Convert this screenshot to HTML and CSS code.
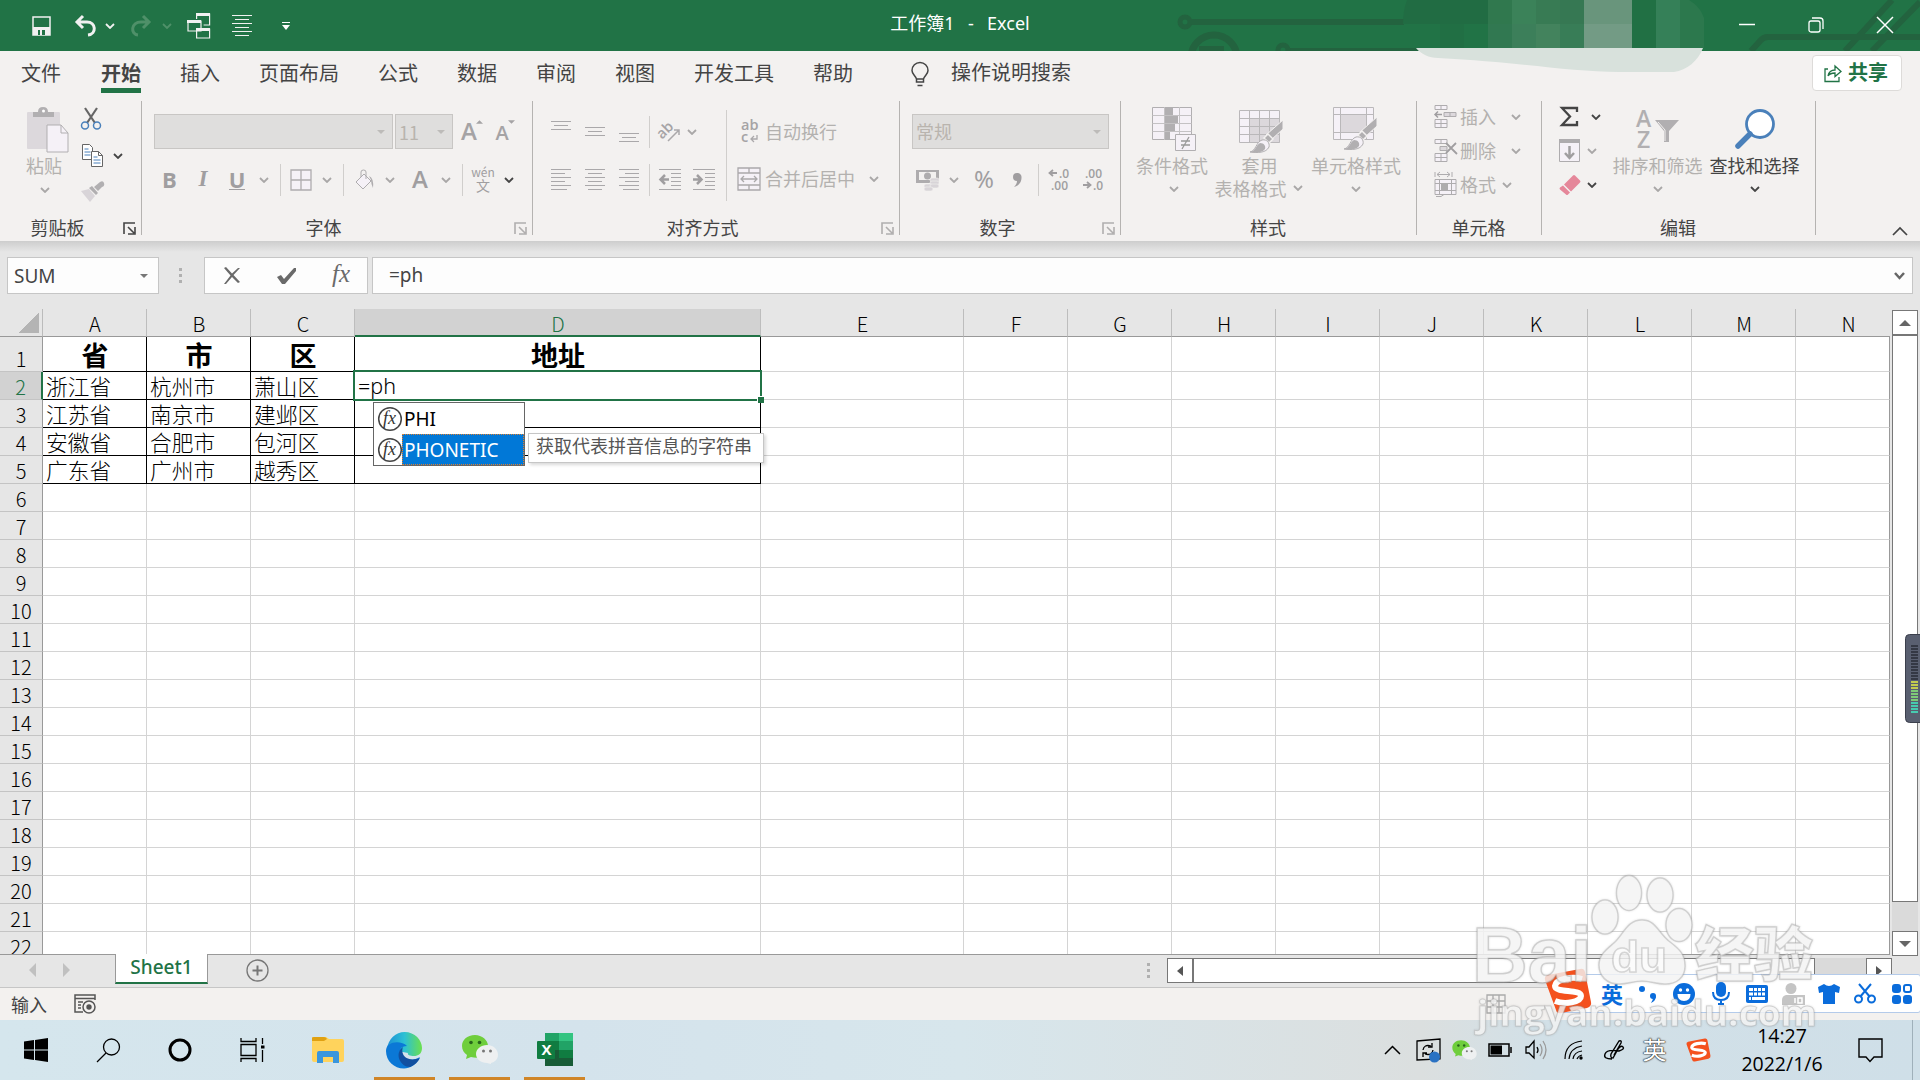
FILE: index.html
```
<!DOCTYPE html>
<html lang="zh-CN">

<head>
    <meta charset="utf-8">
    <title>工作簿1 - Excel</title>
    <link rel="stylesheet" href="styles.css">
</head>

<body>
    <svg class="defs" width="0" height="0">
        <symbol id="chev" viewBox="0 0 10 6"><path d="M1 1l4 4 4-4" fill="none" stroke="currentColor" stroke-width="1.8"/></symbol>
        <symbol id="tri" viewBox="0 0 8 4"><path d="M0 0h8l-4 4z" fill="currentColor"/></symbol>
        <symbol id="launch" viewBox="0 0 13 13"><path d="M1 12V1h11M5 5l6 6M12 5v7H5" fill="none" stroke="currentColor" stroke-width="1.6"/></symbol>
        <symbol id="brush" viewBox="0 0 34 34">
            <path d="M33 1v9L21 21l-5-5z" fill="#b1afb1" stroke="#f3f1f0" stroke-width="1"/>
            <path d="M18 15l5 5-4 4-5-5z" fill="#b1afb1" stroke="#f3f1f0" stroke-width="1.5"/>
            <path d="M0 33c6-1 6-10 12-12 5-1 8 3 7 7-3 6-11 6-19 5z" fill="#f5f1f7" stroke="#b1afb1"/>
            <path d="M0 33c6-1 6-7 10-9 4 0 6 3 5 6-3 4-9 4-15 3z" fill="#b1afb1"/>
        </symbol>
        <symbol id="wechat" viewBox="0 0 36 34">
            <path d="M13 2C5 2 0 7 0 13c0 4 2 7 5 9l-1 4 5-2c11 3 17-3 17-11C26 7 20 2 13 2z" fill="#6fce3c"/>
            <circle cx="9" cy="9.500" r="1.800" fill="#28641c"/><circle cx="17.500" cy="9.500" r="1.800" fill="#28641c"/>
            <path d="M25 12c-6 0-11 4-11 9s5 9 11 9l4 1v-1c4-1 7-4 7-8 0-6-5-10-11-10z" fill="#eef0f1"/>
            <circle cx="21.500" cy="18" r="1.500" fill="#777"/><circle cx="28.500" cy="18" r="1.500" fill="#777"/>
        </symbol>
        <symbol id="sogou" viewBox="0 0 48 46">
            <path d="M4 7L36 1q4-1 5 3l6 30q1 4-4 6l-26 5q-4 1-5-3L1 12q-1-4 3-5z" fill="#f4511e"/>
            <path d="M38 11C28 8 12 11 11 18c0 7 26 3 26 10 0 6-16 9-26 5" fill="none" stroke="#fff" stroke-width="6"/>
        </symbol>
    </svg>

    <!-- title bar -->
    <header class="titlebar">
        <svg class="decor" width="760" height="74" viewBox="1160 0 760 74">
            <clipPath id="bar"><path d="M1160 0h760v51h-760z"/></clipPath>
            <g fill="none" stroke="#23633f" stroke-width="6" clip-path="url(#bar)">
                <circle cx="1185" cy="22" r="5" stroke-width="5"/><path d="M1192 22h212M1290 51h128"/>
                <circle cx="1283" cy="50" r="5" stroke-width="5"/>
                <circle cx="1214" cy="58" r="23" stroke-width="7"/>
                <path d="M1199 49h25"/>
                <path d="M1751 51l9-10q3-4 8-4h152M1845 51l47-51M1872 51l48-49"/>
            </g>
            <path d="M1407 0c-3 8-4 16-4 24h85V0z" fill="#216c43"/>
            <path d="M1440 24h24v24h-24z" fill="#216f44"/>
            <path d="M1488 0h24v24h-24z" fill="#30784e"/><path d="M1488 24h24v24h-24z" fill="#317851"/>
            <path d="M1512 0h24v24h-24z" fill="#3b8259"/><path d="M1512 24h24v24h-24z" fill="#3c7f5a"/>
            <path d="M1536 0h24v24h-24z" fill="#387b54"/><path d="M1536 24h24v24h-24z" fill="#43835d"/>
            <path d="M1560 0h24v24h-24z" fill="#367853"/><path d="M1560 24h24v24h-24z" fill="#387d57"/>
            <path d="M1584 0h48v24h-48z" fill="#69957c"/><path d="M1584 24h48v24h-48z" fill="#739b85"/>
            <path d="M1632 0h24v48h-24z" fill="#217044"/><path d="M1656 0h24v48h-24z" fill="#358058"/>
            <path d="M1680 0h9c8 5 12 10 15 18v30h-24z" fill="#2c784d"/>
            <path d="M1416 48h287c-5 13-16 22-29 24h-55c-50 0-100-10-181-14-9 0-17-4-22-10z" fill="#d8e1dc"/>
        </svg>
        <div class="quick">
            <svg width="20" height="20" viewBox="0 0 20 20"><path d="M1 1h17v18H1z" fill="none" stroke="#f1f1f1" stroke-width="1.5"/><path d="M1 11h17v8H1z" fill="#f1f1f1"/><path d="M6 14h7v5H6z" fill="#217346"/><path d="M8 14h2v5H8z" fill="#f1f1f1"/></svg>
            <svg width="24" height="22" viewBox="0 0 24 22"><path d="M9 1L3 7l6 6M3 7h10c9 0 10 12 1 13" fill="none" stroke="#f1f1f1" stroke-width="3"/></svg>
            <svg class="chev light"><use href="#chev"/></svg>
            <svg width="24" height="22" viewBox="0 0 24 22"><path d="M12 1l6 6-6 6M18 7H10C0 7-1 19 7 20" fill="none" stroke="#4f9069" stroke-width="3"/></svg>
            <svg class="chev dim"><use href="#chev"/></svg>
            <svg width="24" height="26" viewBox="0 0 24 26"><g fill="none" stroke="#f1f1f1" stroke-width="1.2"><path d="M9.600 6V1h13v11h-6"/><path d="M1 8h13v10H1zM9.600 16h13v9H9.600z" fill="#217346"/></g><path d="M9 0h14v3H9zM0 7h14v3H0zM9 15h14v3H9z" fill="#f1f1f1"/></svg>
            <svg width="21" height="24" viewBox="0 0 21 24"><path d="M0 1.500h20M3 5.500h14M0 9.500h20M3 13.500h14M0 17.500h20M3 21.500h14" stroke="#f1f1f1"/></svg>
            <svg width="8" height="8" viewBox="0 0 8 8"><path d="M0 .500h8" stroke="#fff"/><path d="M0 3h8L4 8z" fill="#fff"/></svg>
        </div>
        <div class="doc-title">工作簿1&nbsp; -&nbsp; Excel</div>
        <div class="win-buttons">
            <svg width="16" height="16" viewBox="0 0 16 16"><path d="M0 7.500h16" stroke="#fff" stroke-width="1.500"/></svg>
            <svg width="16" height="16" viewBox="0 0 16 16"><g fill="none" stroke="#fff" stroke-width="1.300"><rect x="1" y="4" width="11" height="11" rx="2"/><path d="M4 1h8q3 0 3 3v8"/></g></svg>
            <svg width="16" height="16" viewBox="0 0 16 16"><path d="M0 0l16 16M16 0L0 16" stroke="#fff" stroke-width="1.500"/></svg>
        </div>
    </header>

    <!-- ribbon tabs -->
    <nav class="tabs">
        <span>文件</span><span class="active">开始</span><span>插入</span><span>页面布局</span><span>公式</span><span>数据</span><span>审阅</span><span>视图</span><span>开发工具</span><span>帮助</span>
        <svg class="bulb" width="18" height="25" viewBox="0 0 18 25"><path d="M5.500 20v-3C4 13 1 12 1 8.500a8 8 0 0 1 16 0C17 12 14 13 12.500 17v3zM5.500 17h7M6.500 23.500h5" fill="none" stroke="#444" stroke-width="1.500"/></svg>
        <span class="tell">操作说明搜索</span>
        <button class="share">
            <svg width="18" height="19" viewBox="0 0 18 19"><path d="M4 5H1v12.500h14V13M4 12c1-5 4-6 7-6V2l6 5.500-6 5V9c-3 0-5 0-7 3z" fill="none" stroke="#217346" stroke-width="1.300"/></svg>
            <span>共享</span>
        </button>
    </nav>

    <!-- ribbon -->
    <section class="ribbon">
        <div class="group g-clip">
            <div class="clip-body">
                <div class="big">
                    <svg width="42" height="46" viewBox="0 0 42 46"><rect y="5" width="33" height="37" rx="1" fill="#dcd8dc"/><path d="M6 10V5h5q0-5 5-5t5 5h6v5z" fill="#b1afb1"/><circle cx="16.500" cy="4" r="1.500" fill="#fff"/><path d="M20 18h14l7 8v19H20z" fill="#f5f1f7" stroke="#b1afb1"/><path d="M34 18v8h7" fill="none" stroke="#b1afb1"/></svg>
                    <span>粘贴</span>
                    <svg class="chev"><use href="#chev"/></svg>
                </div>
                <div class="clip-side">
                    <svg width="20" height="22" viewBox="0 0 20 22"><path d="M4 0l10 15M16 0L6 15" stroke="#666" stroke-width="2.200"/><g fill="none" stroke="#4a80ba" stroke-width="1.500"><circle cx="4" cy="17.500" r="3.500"/><circle cx="16" cy="17.500" r="3.500"/></g></svg>
                    <span class="copy">
                        <svg width="21" height="23" viewBox="0 0 21 23"><g fill="#fff" stroke="#666"><path d="M.500.500h7l3 3v12H.500z"/><path d="M9.500 7.500h7l4 4v11h-11z"/><path d="M16.500 7.500v4h4" fill="none"/></g><path d="M2.500 5h4M2.500 8h6M2.500 11h6M11.500 13h4M11.500 16h7M11.500 19h7" stroke="#4a80ba"/></svg>
                        <svg class="chev dark"><use href="#chev"/></svg>
                    </span>
                    <svg width="24" height="22" viewBox="0 0 24 22"><path d="M0 10l8-2 6 7-5 6z" fill="#d8d4d8"/><path d="M8 7l3-2 6 7-2 2zM13 6l6-5q3-2 4 1t-2 4l-4 4z" fill="#b1afb1"/></svg>
                </div>
            </div>
            <footer><span>剪贴板</span><svg class="launch dark"><use href="#launch"/></svg></footer>
        </div>

        <div class="group g-font">
            <div class="row combos">
                <div class="combo"><svg class="tri"><use href="#tri"/></svg></div>
                <div class="combo size">11<svg class="tri"><use href="#tri"/></svg></div>
                <span class="grow">A<svg class="tri up"><use href="#tri"/></svg></span>
                <span class="grow small">A<svg class="tri"><use href="#tri"/></svg></span>
            </div>
            <div class="row font-tools">
                <b>B</b><i class="ital">I</i><b class="under">U</b><svg class="chev"><use href="#chev"/></svg>
                <i class="sep"></i>
                <svg width="22" height="22" viewBox="0 0 22 22"><path d="M1 1h20v20H1zM11 1v20M1 11h20" fill="#f5f1f7" stroke="#aeacae" stroke-width="1.300"/></svg>
                <svg class="chev"><use href="#chev"/></svg>
                <i class="sep"></i>
                <svg width="19" height="20" viewBox="0 0 19 20"><path d="M8 4l7 7-8 8-7-7z" fill="#f5f1f7" stroke="#aeacae"/><path d="M5 7V2q0-2 2.500-2T10 2v7" fill="none" stroke="#aeacae"/><path d="M13 6q5 2 4 12-2-4-2-8z" fill="#aeacae"/></svg>
                <svg class="chev"><use href="#chev"/></svg>
                <b class="fa">A</b><svg class="chev"><use href="#chev"/></svg>
                <i class="sep"></i>
                <span class="wen"><em>wén</em><em>文</em></span>
                <svg class="chev dark"><use href="#chev"/></svg>
            </div>
            <footer><span>字体</span><svg class="launch"><use href="#launch"/></svg></footer>
        </div>

        <div class="group g-align">
            <div class="align-body">
                <div class="align-left">
                    <div class="row align-tools">
                        <svg width="20" height="22" viewBox="0 0 20 22"><path d="M0 .500h20M3 4.500h14M0 8.500h20" stroke="#aaa8aa"/></svg>
                        <svg width="20" height="22" viewBox="0 0 20 22"><path d="M0 6.500h20M3 10.500h14M0 14.500h20" stroke="#aaa8aa"/></svg>
                        <svg width="20" height="22" viewBox="0 0 20 22"><path d="M0 12.500h20M3 16.500h14M0 20.500h20" stroke="#aaa8aa"/></svg>
                        <i class="sep"></i>
                        <svg width="22" height="22" viewBox="0 0 22 22"><text x="-1" y="13" transform="rotate(-45 8 11)" class="ab">ab</text><path d="M9 20L20 9M15 9h5v5" fill="none" stroke="#aaa8aa" stroke-width="1.500"/></svg>
                        <svg class="chev"><use href="#chev"/></svg>
                    </div>
                    <div class="row align-tools second">
                        <svg width="20" height="22" viewBox="0 0 20 22"><path d="M0 .500h20M0 4.500h14M0 8.500h20M0 12.500h14M0 16.500h20M0 20.500h16" stroke="#aaa8aa"/></svg>
                        <svg width="20" height="22" viewBox="0 0 20 22"><path d="M0 .500h20M3 4.500h14M0 8.500h20M3 12.500h14M0 16.500h20M3 20.500h14" stroke="#aaa8aa"/></svg>
                        <svg width="20" height="22" viewBox="0 0 20 22"><path d="M0 .500h20M6 4.500h14M0 8.500h20M6 12.500h14M0 16.500h20M4 20.500h16" stroke="#aaa8aa"/></svg>
                        <i class="sep"></i>
                        <svg width="22" height="22" viewBox="0 0 22 22"><path d="M0 .500h22M12 4.500h10M12 8.500h10M12 12.500h10M12 16.500h10M0 20.500h22" stroke="#aaa8aa"/><path d="M10 10.500H2M6 6l-4.500 4.500L6 15" fill="none" stroke="#a09ea0" stroke-width="2.500"/></svg>
                        <svg width="22" height="22" viewBox="0 0 22 22"><path d="M0 .500h22M12 4.500h10M12 8.500h10M12 12.500h10M12 16.500h10M0 20.500h22" stroke="#aaa8aa"/><path d="M0 10.500h8M4 6l4.500 4.500L4 15" fill="none" stroke="#a09ea0" stroke-width="2.500"/></svg>
                    </div>
                </div>
                <i class="sep tall"></i>
                <div class="align-right">
                    <div class="wrap"><svg width="24" height="24" viewBox="0 0 24 24"><text x="4" y="10" class="ab">ab</text><text x="4" y="22" class="ab">c</text><path d="M20 15v4h-6M17 16l-3 3 3 3" fill="none" stroke="#aaa8aa" stroke-width="1.300"/></svg><span>自动换行</span></div>
                    <div class="wrap second"><svg width="24" height="24" viewBox="0 0 24 24"><path d="M1 1h22v22H1zM1 6h22M1 18h22M12 1v5M12 18v5M4 12h16M7 9l-3 3 3 3M17 9l3 3-3 3" fill="#f5f1f7" stroke="#aaa8aa" stroke-width="1.300"/></svg><span>合并后居中</span><svg class="chev"><use href="#chev"/></svg></div>
                </div>
            </div>
            <footer><span>对齐方式</span><svg class="launch"><use href="#launch"/></svg></footer>
        </div>

        <div class="group g-num">
            <div class="combo fmt"><span>常规</span><svg class="tri"><use href="#tri"/></svg></div>
            <div class="row num-tools">
                <svg width="23" height="23" viewBox="0 0 23 23"><path d="M0 1h23v13H0z" fill="#aeacae"/><path d="M3 3h17v8H3z" fill="#f3f1f0"/><circle cx="11.500" cy="7" r="3.500" fill="#aeacae"/><g fill="#d8d4d8" stroke="#f3f1f0" stroke-width=".6"><rect x="14" y="9" width="9" height="4" rx="2"/><rect x="14" y="12" width="9" height="4" rx="2"/><rect x="8" y="15" width="9" height="4" rx="2"/><rect x="14" y="15" width="9" height="4" rx="2"/><rect x="8" y="18" width="9" height="4" rx="2"/></g></svg>
                <svg class="chev"><use href="#chev"/></svg>
                <span class="pct">%</span>
                <svg width="9" height="14" viewBox="0 0 9 14"><path d="M4 0a4 4 0 0 1 4.500 4.500C8.500 10 5 13 1 14c2-2 3-4 3-6A4 4 0 0 1 4 0z" fill="#a09ea0"/></svg>
                <i class="sep"></i>
                <svg width="23" height="24" viewBox="0 0 23 24"><text x="11" y="10" class="dec">.0</text><text x="3" y="22" class="dec">.00</text><path d="M9 5H2M5 2L1.500 5 5 8" fill="none" stroke="#a09ea0" stroke-width="1.800"/></svg>
                <svg width="23" height="24" viewBox="0 0 23 24"><text x="3" y="10" class="dec">.00</text><text x="11" y="22" class="dec">.0</text><path d="M1 17h7M5 14l3.500 3L5 20" fill="none" stroke="#a09ea0" stroke-width="1.800"/></svg>
            </div>
            <footer><span>数字</span><svg class="launch"><use href="#launch"/></svg></footer>
        </div>

        <div class="group g-style">
            <div class="style-body">
                <div class="big cond">
                    <svg width="46" height="46" viewBox="0 0 46 46"><path d="M.500.500h39v32H.500z" fill="#f5f1f7" stroke="#b1afb1"/><path d="M.500 8.500h39M.500 16.500h39M.500 24.500h39M12.500 0v33M27.500 0v33" fill="none" stroke="#c4c2c4"/><path d="M13 1h8v7h-8zM13 9h13v7H13zM13 17h10v7H13zM13 25h5v7h-5z" fill="#b1afb1"/><path d="M23.500 27.500h20v16h-20z" fill="#f5f1f7" stroke="#b1afb1"/><path d="M29 34h9M29 38h9M37 30l-7 12" stroke="#999" stroke-width="1.300"/></svg>
                    <span>条件格式</span>
                    <svg class="chev"><use href="#chev"/></svg>
                </div>
                <div class="big tbl">
                    <svg width="46" height="46" viewBox="0 0 46 46"><path d="M.500 3.500h40v32H.500z" fill="#f5f1f7"/><path d="M11 12h30v24H11z" fill="#dcd8dc"/><path d="M.500 3.500h40v32H.500zM0 11.500h40M0 19.500h40M0 27.500h40M10.500 4v32M20.500 4v32M30.500 4v32" fill="none" stroke="#bab8ba"/><use href="#brush" x="11" y="12" width="34" height="34"/></svg>
                    <span>套用</span>
                    <div class="inline-chev">表格格式<svg class="chev"><use href="#chev"/></svg></div>
                </div>
                <div class="big">
                    <svg width="46" height="46" viewBox="0 0 46 46"><path d="M.500.500h40v32H.500z" fill="#f5f1f7"/><path d="M8 8h26v17H8z" fill="#dcd8dc"/><path d="M.500.500h40v32H.500zM0 7.500h40M0 25.500h40M7.500 0v32M33.500 0v32" fill="none" stroke="#bab8ba"/><use href="#brush" x="11" y="9" width="34" height="34"/></svg>
                    <span>单元格样式</span>
                    <svg class="chev"><use href="#chev"/></svg>
                </div>
            </div>
            <footer><span>样式</span></footer>
        </div>

        <div class="group g-cells">
            <div class="cell-cmd"><svg width="23" height="23" viewBox="0 0 23 23"><path d="M1 .500h12v4H1zM7 0v4M1 14.500h12v8H1zM1 18.500h12M7 14v8" fill="#f5f1f7" stroke="#aeacae"/><path d="M10 7.500h12v4H10zM16 7v4" fill="#dcd8dc" stroke="#aeacae"/><path d="M8 9.500H1M4 6.500l-3 3 3 3" fill="none" stroke="#a09ea0" stroke-width="1.500"/></svg><span>插入</span><svg class="chev"><use href="#chev"/></svg></div>
            <div class="cell-cmd"><svg width="23" height="23" viewBox="0 0 23 23"><path d="M1 .500h12v4H1zM7 0v4M1 14.500h12v8H1zM1 18.500h12M7 14v8" fill="#f5f1f7" stroke="#aeacae"/><path d="M6 7.500h7v4H6z" fill="#dcd8dc" stroke="#aeacae"/><path d="M12 4l11 11M22 4L12 14" fill="none" stroke="#a09ea0" stroke-width="1.800"/></svg><span>删除</span><svg class="chev"><use href="#chev"/></svg></div>
            <div class="cell-cmd fmt-cmd"><svg width="23" height="25" viewBox="0 0 23 25"><path d="M1 7.500h21v15H1zM1 11.500h21M1 18.500h21M5.500 7v15M17.500 7v15" fill="#f5f1f7" stroke="#aeacae"/><path d="M7 11h7v7H7z" fill="#aeacae"/><path d="M1 0v5M18 0v5M3 2.500h13M6 0L3 2.500 6 5M13 0l3 2.500L13 5M2 24.500h5l3-2" fill="none" stroke="#aeacae"/></svg><span>格式</span><svg class="chev"><use href="#chev"/></svg></div>
            <footer><span>单元格</span></footer>
        </div>

        <div class="group g-edit">
            <div class="edit-body">
                <div class="edit-side">
                    <div class="edit-cmd"><svg width="22" height="22" viewBox="0 0 22 22"><path d="M18 6V2H3l8 8.500L3 19h15v-4" fill="none" stroke="#444" stroke-width="2.300"/></svg><svg class="chev dark"><use href="#chev"/></svg></div>
                    <div class="edit-cmd"><svg width="22" height="24" viewBox="0 0 22 24"><path d="M.500.500h20v22H.500z" fill="#f5f1f7" stroke="#aeacae"/><path d="M0 0h21v4H0z" fill="#aeacae"/><path d="M10.500 7v12M6 14l4.500 5 4.500-5" fill="none" stroke="#a09ea0" stroke-width="2.500"/></svg><svg class="chev"><use href="#chev"/></svg></div>
                    <div class="edit-cmd"><svg width="22" height="22" viewBox="0 0 22 22"><path d="M14 1.500q1-1 2 0l5 5q1 1 0 2l-9 9-7-7zM4 11.500l7 7-2 2q-1 1-2 0l-6-5q-1-1 0-2z" fill="#e5879a"/></svg><svg class="chev dark"><use href="#chev"/></svg></div>
                </div>
                <div class="big">
                    <svg width="44" height="40" viewBox="0 0 44 40"><text x="0" y="17" class="az">A</text><text x="1" y="38" class="az">Z</text><path d="M19 10h24L33 21v11h-5V21z" fill="#b1afb1"/><path d="M22 12l7 8v11" fill="none" stroke="#f3f1f0"/></svg>
                    <span>排序和筛选</span>
                    <svg class="chev"><use href="#chev"/></svg>
                </div>
                <div class="big on">
                    <svg width="42" height="42" viewBox="0 0 42 42"><circle cx="26" cy="15" r="13.500" fill="#fff" stroke="#4a80ba" stroke-width="2.800"/><path d="M16 25L4 37" stroke="#4a80ba" stroke-width="5.500" stroke-linecap="round"/></svg>
                    <span>查找和选择</span>
                    <svg class="chev dark"><use href="#chev"/></svg>
                </div>
            </div>
            <footer><span>编辑</span></footer>
        </div>
        <svg class="collapse" width="16" height="10" viewBox="0 0 16 10"><path d="M1 9l7-7 7 7" fill="none" stroke="#444" stroke-width="1.700"/></svg>
    </section>

    <!-- formula bar -->
    <section class="formula-bar">
        <div class="box name-box">SUM<svg class="tri"><use href="#tri"/></svg></div>
        <svg class="grip" width="3" height="16"><path d="M0 0h3v3H0zM0 6h3v3H0zM0 12h3v3H0z" fill="#b0b0b0"/></svg>
        <div class="box fx-box">
            <svg width="18" height="17" viewBox="0 0 18 17"><path d="M1 1l2-1 6 6.500L15 1h2l-6.500 7L17 15l-2 1-6-6-6 7H1l6.500-8.500z" fill="#6a6a6a"/></svg>
            <svg width="20" height="18" viewBox="0 0 20 18"><path d="M0 10l4-2 3 4L17 1l2 0v3L8 17H5z" fill="#6a6a6a"/></svg>
            <span>fx</span>
        </div>
        <div class="box input"><span>=ph</span><svg width="11" height="8" viewBox="0 0 11 8"><path d="M1 1l4.500 5L10 1" fill="none" stroke="#666" stroke-width="2.500"/></svg></div>
    </section>

    <!-- worksheet -->
    <main class="workspace">
        <div class="sheet-wrap">
            <div class="sheet" id="sheet"></div>
            <div class="cell-edit"></div>
            <div class="suggest">
                <div><svg width="26" height="26" viewBox="0 0 26 26"><circle cx="13" cy="13" r="11.300" fill="#fff" stroke="#444" stroke-width="1.500"/><text x="6" y="18" class="fxi">fx</text></svg><span>PHI</span></div>
                <div class="picked"><svg width="26" height="26" viewBox="0 0 26 26"><circle cx="13" cy="13" r="11.300" fill="#fff" stroke="#444" stroke-width="1.500"/><text x="6" y="18" class="fxi">fx</text></svg><span>PHONETIC</span></div>
            </div>
            <div class="hint">获取代表拼音信息的字符串</div>
        </div>
        <div class="vscroll">
            <div class="sbtn"><svg class="tri up"><use href="#tri"/></svg></div>
            <div class="vthumb"></div>
            <div class="sbtn down"><svg class="tri"><use href="#tri"/></svg></div>
        </div>
    </main>

    <div class="sheet-tabs">
        <svg width="42" height="14" viewBox="0 0 42 14"><path d="M8 0v14L1 7zM35 0v14l7-7z" fill="#c0c0c0"/></svg>
        <div class="sheet-tab">Sheet1</div>
        <svg class="add" width="23" height="23" viewBox="0 0 23 23"><circle cx="11.500" cy="11.500" r="10.500" fill="none" stroke="#777" stroke-width="1.300"/><path d="M11.500 6.500v10M6.500 11.500h10" stroke="#777" stroke-width="2"/></svg>
        <svg class="grip" width="3" height="16"><path d="M0 0h3v3H0zM0 6h3v3H0zM0 12h3v3H0z" fill="#b0b0b0"/></svg>
        <div class="hscroll">
            <div class="sbtn"><svg width="6" height="10"><path d="M6 0v10L0 5z" fill="#555"/></svg></div>
            <div class="hthumb"></div>
            <div class="sbtn right"><svg width="6" height="10"><path d="M0 0v10l6-5z" fill="#555"/></svg></div>
        </div>
    </div>

    <div class="status">
        <span>输入</span>
        <svg width="23" height="20" viewBox="0 0 23 20"><path d="M9 18H1V1h20v5M1 4.500h20M4 8h5M4 11h3M4 14h3" fill="none" stroke="#555" stroke-width="1.500"/><circle cx="15" cy="13" r="6" fill="none" stroke="#555" stroke-width="1.500"/><circle cx="15" cy="13" r="2.700" fill="#555"/></svg>
        <svg class="view" width="21" height="21" viewBox="0 0 21 21"><path d="M1 1h18v18H1zM7 1v18M13 1v18M1 7h18M1 13h18" fill="none" stroke="#aaa" stroke-width="1.300"/></svg>
    </div>

    <!-- windows taskbar -->
    <div class="taskbar">
        <div class="apps">
            <span><svg width="24" height="24" viewBox="0 0 24 24"><path d="M0 3.500l10-1.500v9.500H0zM11 2l13-2v11.500H11zM0 12.500h10V22L0 20.500zM11 12.500h13V24l-13-2z"/></svg></span>
            <span><svg width="25" height="25" viewBox="0 0 25 25"><circle cx="15.500" cy="9" r="8" fill="none" stroke="#000" stroke-width="1.300"/><path d="M10 15L1 24" stroke="#000" stroke-width="1.300"/></svg></span>
            <span><svg width="24" height="24" viewBox="0 0 24 24"><circle cx="12" cy="12" r="10" fill="none" stroke="#000" stroke-width="3"/></svg></span>
            <span><svg width="25" height="24" viewBox="0 0 25 24"><path d="M1 0v3.500h15V0M1 6.500h15v11H1zM1 24v-3.500h15V24M22.500 0v6M22.500 12v12" fill="none" stroke="#000" stroke-width="1.300"/><path d="M21 7.500h3.500v3H21z"/></svg></span>
            <span><svg width="33" height="28" viewBox="0 0 33 28"><path d="M0 2q0-1 2-1h12l3 2h13q2 0 2 2v19q0 2-2 2H2q-2 0-2-2z" fill="#ffd35c"/><path d="M0 2q0-1 2-1h10q2 0 3 2l-3 2H0z" fill="#e0a112"/><path d="M5 27V17q0-2 2-2h18q2 0 2 2v10h-6v-6H11v6z" fill="#3a96dd"/></svg></span>
            <span class="open"><svg width="37" height="37" viewBox="0 0 37 37"><defs><linearGradient id="e1"><stop offset="0" stop-color="#1b8fd6"/><stop offset=".5" stop-color="#2cc0d4"/><stop offset="1" stop-color="#6be04e"/></linearGradient></defs><path d="M1 17C2 7 10 0 18.500 0 29 0 36 8 36 16c0 6-4 8-8 8-4 0-7-1-6-3z" fill="url(#e1)"/><path d="M0 19C0 9 15 8 21 14c-6 0-9 4-6 10 4 5 12 5 19 1-4 8-10 11.500-16 11.500C8 36.500 0 29 0 19z" fill="#0b78d6"/><path d="M17 15c-9 6-3 20 7 20 5-2 8-5 10-9-8 3-15 1-17-4-1-2-1-5 0-7z" fill="#1150a0"/></svg></span>
            <span class="open"><svg width="36" height="34"><use href="#wechat"/></svg></span>
            <span class="open"><svg width="36" height="34" viewBox="0 0 36 34"><path d="M8 0h28v33H8z" fill="#21a366"/><path d="M22 0h14v8H22z" fill="#33c481"/><path d="M8 8h14v9H8zM22 17h14v8H22z" fill="#107c41"/><path d="M8 17h14v8H8zM8 25h28v8H8z" fill="#185c37"/><rect y="8" width="18" height="18" rx="1" fill="#107c41"/><text x="4.500" y="22" class="xl">X</text></svg></span>
        </div>
        <div class="tray">
            <svg width="17" height="10" viewBox="0 0 17 10"><path d="M1 9l7.500-7.500L16 9" fill="none" stroke="#000" stroke-width="1.500"/></svg>
            <svg width="25" height="25" viewBox="0 0 25 25"><path d="M1 3l23-2v20l-23 1z" fill="none" stroke="#000" stroke-width="1.300"/><path d="M7 12q1-6 8-4M16 5v4h-4M17 12q-1 6-8 4M7 19v-4h4" fill="none" stroke="#000" stroke-width="1.300"/><circle cx="18.500" cy="19" r="5.500" fill="#2a72c3"/></svg>
            <svg width="25" height="23"><use href="#wechat"/></svg>
            <svg width="24" height="14" viewBox="0 0 24 14"><path d="M1 1h20v12H1zM23 4v6" fill="none" stroke="#000" stroke-width="1.500"/><path d="M2.500 2.500H14v9H2.500z"/></svg>
            <svg width="23" height="20" viewBox="0 0 23 20"><path d="M1 7h3l5-6v17l-5-5H1zM12 7q2 3 0 6" fill="none" stroke="#000" stroke-width="1.300"/><path d="M15 4q4 6 0 12M18 1q6 9 0 18" fill="none" stroke="#999" stroke-width="1.300"/></svg>
            <svg width="20" height="20" viewBox="0 0 20 20"><g fill="none" stroke="#000" stroke-width="1.200"><path d="M1 19Q1 3 18 1M5 19Q6 8 18 6M9 19q1-7 9-8M13 19q1-3 5-4"/></g><circle cx="17" cy="18" r="1.700"/></svg>
            <svg width="21" height="20" viewBox="0 0 21 20"><path d="M8 19q-9 0-7-5t14-3q6-2 4-4t-5 2L9 18q-3 0-2-4l8-13q3-1 2 2l-7 12" fill="none" stroke="#000" stroke-width="1.400"/></svg>
            <span class="ime-lang">英</span>
            <svg width="25" height="24"><use href="#sogou"/></svg>
            <div class="clock"><span>14:27</span><span>2022/1/6</span></div>
            <svg width="25" height="25" viewBox="0 0 25 25"><path d="M1 1h23v18h-8l-4 4.500L8 19H1z" fill="none" stroke="#000" stroke-width="1.400"/></svg>
            <i class="desk"></i>
        </div>
    </div>

    <!-- floating input method bar -->
    <div class="ime">
        <svg class="ime-logo" width="48" height="46"><use href="#sogou"/></svg>
        <b>英</b>
        <svg width="18" height="18" viewBox="0 0 18 18"><circle cx="3" cy="4" r="3"/><circle cx="14" cy="11" r="3"/><path d="M17 11q0 5-5 7 2-3 2-5z"/></svg>
        <svg width="22" height="22" viewBox="0 0 22 22"><circle cx="11" cy="11" r="11"/><path d="M4.500 11h13q0 7-6.500 7t-6.500-7z" fill="#fff"/><circle cx="7.500" cy="7" r="1.700" fill="#fff"/><circle cx="14.500" cy="7" r="1.700" fill="#fff"/></svg>
        <svg width="18" height="23" viewBox="0 0 18 23"><rect x="4" width="10" height="15" rx="5"/><path d="M1 10q0 8 8 8t8-8M9 18v3M6 22h6" fill="none" stroke="#0a6cdb" stroke-width="2"/></svg>
        <svg width="22" height="18" viewBox="0 0 22 18"><rect width="22" height="18" rx="2"/><path d="M3 3h4v3H3zM8 3h3v3H8zM12 3h3v3h-3zM16 3h3v3h-3zM3 7.500h4v3H3zM8 7.500h3v3H8zM12 7.500h3v3h-3zM16 7.500h3v3h-3zM3 12h2v3H3zM6 12h13v3H6z" fill="#fff"/></svg>
        <svg width="23" height="22" viewBox="0 0 23 22" fill="#c4c4c4"><circle cx="9" cy="5.500" r="5.500"/><path d="M0 22v-5q0-4 4-5h9l2 1v9zM10 12h13v10H10z"/><path d="M13 15v5M16 15h4v5h-4z" fill="none" stroke="#fff" stroke-width="1.500"/></svg>
        <svg width="22" height="20" viewBox="0 0 22 20"><path d="M6 0q5 4 10 0l6 3-1 6-4-1v12H5V8L1 9 0 3z"/></svg>
        <svg width="22" height="20" viewBox="0 0 22 20"><g fill="none" stroke="#0a6cdb" stroke-width="2"><path d="M5 0l11 13M17 0L6 13"/><circle cx="4.500" cy="15" r="3.500"/><circle cx="17.500" cy="15" r="3.500"/></g></svg>
        <svg width="20" height="20" viewBox="0 0 20 20"><rect width="9" height="9" rx="3"/><rect y="11" width="9" height="9" rx="3"/><rect x="11" y="11" width="9" height="9" rx="3"/><rect x="12" y="1" width="7" height="7" rx="2" fill="none" stroke="#0a6cdb" stroke-width="2"/></svg>
    </div>

    <svg class="meter" width="15" height="90" viewBox="0 0 15 90">
        <rect x=".5" y=".5" width="20" height="88" rx="4" fill="#595f70" stroke="#3b3f4c"/>
        <path d="M9.500 11v35" stroke="#343844" stroke-width="7" stroke-dasharray="2 1"/>
        <path d="M9.500 47v9" stroke="#c2cb4e" stroke-width="7" stroke-dasharray="2 1"/>
        <path d="M9.500 56v12" stroke="#7ecb78" stroke-width="7" stroke-dasharray="2 1"/>
        <path d="M9.500 68v11" stroke="#47cbb0" stroke-width="7" stroke-dasharray="2 1"/>
    </svg>

    <svg class="watermark" width="360" height="170" viewBox="1466 870 360 170">
        <ellipse cx="1629" cy="893" rx="12.500" ry="17.500"/><ellipse cx="1660" cy="895" rx="13" ry="17"/>
        <ellipse cx="1605" cy="917" rx="13" ry="17"/><ellipse cx="1679" cy="925" rx="13" ry="16.500"/>
        <path d="M1642 920c14 0 16 13 28 22 9 7 15 12 15 24 0 12-9 18-20 18-9 0-14-3-23-3s-14 3-23 3c-12 0-20-8-20-19 0-10 7-15 15-22 10-9 13-23 28-23z"/>
        <text x="1472" y="982" class="wm-bai" textLength="120" lengthAdjust="spacingAndGlyphs">Bai</text>
        <text x="1611" y="972" class="wm-du" textLength="56" lengthAdjust="spacingAndGlyphs">du</text>
        <text x="1695" y="976" class="wm-cn">经验</text>
        <text x="1477" y="1026" class="wm-url" textLength="340" lengthAdjust="spacingAndGlyphs">jingyan.baidu.com</text>
    </svg>

    <script>
        var letters = "ABCDEFGHIJKLMN".split("");
        var data = [
            ["省", "市", "区", "地址"],
            ["浙江省", "杭州市", "萧山区", "=ph"],
            ["江苏省", "南京市", "建邺区", ""],
            ["安徽省", "合肥市", "包河区", ""],
            ["广东省", "广州市", "越秀区", ""]
        ];
        var sheet = document.getElementById("sheet");

        function addCell(cls, text) {
            var el = document.createElement("div");
            el.className = cls;
            el.textContent = text;
            sheet.appendChild(el);
        }

        addCell("corner", "");
        letters.forEach(l => addCell(l == "D" ? "col current" : "col", l));
        for (var r = 1; r <= 22; r++) {
            addCell(r == 2 ? "rownum current" : "rownum", r);
            for (var c = 0; c < letters.length; c++) {
                var filled = r <= 5 && c < 4;
                var cls = "cell";
                if (filled) cls += " filled";
                if (filled && r == 1) cls += " head";
                if (r == 2 && c == 3) cls += " editing";
                addCell(cls, filled ? data[r - 1][c] : "");
            }
        }
    </script>
</body>

</html>
```
FILE: styles.css
```
* {
    box-sizing: border-box;
}

body {
    margin: 0;
    width: 1920px;
    height: 1080px;
    overflow: hidden;
    position: relative;
    background-color: #e6e6e6;
    font-family: "Noto Sans CJK SC", sans-serif;
    font-size: 18px;
    color: #444;
    display: flex;
    flex-direction: column;
}

svg {
    flex: none;
    display: block;
    overflow: visible;
}

.defs {
    position: absolute;
}

.chev {
    width: 10px;
    height: 6px;
    color: #a9a7a7;
}

.chev.dark,
.launch.dark {
    color: #444;
}

.chev.light {
    color: #f1f1f1;
}

.chev.dim {
    color: #4f9069;
}

.tri {
    width: 8px;
    height: 4px;
}

.tri.up {
    transform: rotate(180deg);
}

.launch {
    width: 13px;
    height: 13px;
    color: #b0aeae;
}

/* title bar */
.titlebar {
    height: 51px;
    flex: none;
    background-color: #217346;
    display: grid;
    grid-template-columns: 1fr 200px 1fr;
    color: #fff;
    position: relative;
}

.decor {
    position: absolute;
    right: 0;
    top: 0;
}

.quick {
    display: grid;
    grid-template-columns: 42px 31px 26px 31px 25px 45px 50px 8px;
    align-items: center;
    padding-left: 32px;
    justify-content: start;
}

.doc-title {
    line-height: 46px;
    text-align: center;
    white-space: nowrap;
    font-family: "Noto Sans", "Noto Sans CJK SC", sans-serif;
    font-size: 18px;
    word-spacing: 2px;
}

.win-buttons {
    display: flex;
    justify-content: flex-end;
    gap: 53px;
    padding: 17px 27px 0 0;
    position: relative;
}

/* tabs */
.tabs {
    height: 46px;
    flex: none;
    background-color: #f3f1f0;
    display: flex;
    gap: 39px;
    padding: 4px 18px 0 21px;
    font-size: 20px;
    line-height: 35px;
}

.tabs > span:first-child {
    margin-right: 1px;
}

.tabs .active {
    font-weight: bold;
    border-bottom: 5px solid #217346;
    height: 38px;
}

.bulb {
    margin: 7px -17px 0 19px;
}

.tabs .tell {
    line-height: 34px;
}

.share {
    margin-left: auto;
    width: 90px;
    height: 36px;
    background-color: #fff;
    border: 1px solid #dddbd9;
    border-radius: 4px;
    color: #217346;
    font: bold 20px/30px "Noto Sans CJK SC", sans-serif;
    display: flex;
    align-items: center;
    gap: 6px;
    padding: 0 0 0 11px;
    position: relative;
}

.share span {
    padding-bottom: 2px;
}

/* ribbon */
.ribbon {
    height: 144px;
    flex: none;
    background-color: #f3f1f0;
    padding-top: 4px;
    display: flex;
    line-height: 20px;
    color: #b3b1af;
}

.group {
    height: 134px;
    border-right: 1px solid #b5b3b1;
    display: flex;
    flex-direction: column;
}

.group footer {
    margin-top: auto;
    height: 14px;
    line-height: 12px;
    color: #444;
    display: grid;
    grid-template-columns: 1fr 13px;
    padding-right: 5px;
    text-align: center;
}

.group footer .launch {
    margin-top: 1px;
}

.g-clip { width: 142px; }
.g-font { width: 391px; padding: 13px 0 0 12px; }
.g-align { width: 367px; }
.g-num { width: 221px; padding: 13px 0 0 12px; }
.g-style { width: 296px; }
.g-cells { width: 125px; padding: 4px 0 0 17px; }
.g-edit { width: 274px; }

.g-clip footer span { margin-left: -8px; }
.g-font footer span { margin-left: -21px; }
.g-align footer span { margin-left: -9px; }
.g-num footer span { margin-left: -19px; }
.g-style footer span { margin-left: 17px; }
.g-edit footer span { margin-left: 17px; }

.big {
    display: flex;
    flex-direction: column;
    align-items: center;
    white-space: nowrap;
}

.big > svg:first-child {
    margin-bottom: 2px;
}

.big .chev {
    margin-top: 11px;
}

.big.on {
    color: #444;
}

.clip-body {
    display: flex;
    padding: 6px 0 0 26px;
}

.clip-body .big > span {
    margin-right: 9px;
}

.clip-body .big .chev {
    margin: 12px 8px 0 0;
}

.clip-body .big > svg:first-child {
    margin-left: -1px;
}

.clip-side {
    display: flex;
    flex-direction: column;
    gap: 14px;
    margin-left: 10px;
    padding-top: 1px;
}

.copy {
    display: flex;
    align-items: center;
    gap: 10px;
    padding-left: 1px;
}

.row {
    display: grid;
    align-items: center;
    justify-items: center;
    height: 36px;
}

.combos {
    grid-template-columns: 239px 58px 18px 18px;
    column-gap: 2px;
    align-items: start;
}

.combo {
    width: 100%;
    height: 35px;
    background-color: #dfdedd;
    border: 1px solid #c8c6c4;
    display: flex;
    align-items: center;
    justify-content: space-between;
    padding: 0 7px 0 3px;
    color: #b9b4ae;
}

.combo .tri {
    color: #bdbbb9;
}

.combo .tri:only-child {
    margin-left: auto;
}

.combo.fmt {
    width: 197px;
    flex: none;
}

.combo.fmt span {
    padding-bottom: 1px;
}

.grow {
    display: flex;
    font: 600 24px/33px "Open Sans", sans-serif;
    color: #a5a3a5;
    margin-left: 16px;
}

.grow.small {
    font-size: 20px;
    line-height: 37px;
    margin-left: 42px;
}

.grow .tri {
    width: 7px;
    margin: 6px 0 0 -1px;
}

.font-tools {
    grid-template-columns: 31px 36px 32px 22px 10px 31px 22px 10px 34px 16px 44px 8px 24px 18px 34px;
    margin-top: 12px;
    font: 22px/26px "Open Sans", sans-serif;
    color: #a09ea0;
}

.font-tools b,
.font-tools .ital {
    padding-bottom: 3px;
}

.ital {
    font: italic bold 23px "Liberation Serif", serif;
}

.font-tools .under {
    border-bottom: 1px solid #a09ea0;
    line-height: 20px;
    padding-bottom: 0;
    margin-bottom: 1px;
}

.font-tools .fa {
    font-weight: 600;
    font-size: 24px;
}

.sep {
    width: 1px;
    height: 32px;
    background-color: #d0cecc;
}

.wen {
    display: flex;
    flex-direction: column;
    align-items: center;
}

.wen em {
    font: 12px/10px "Noto Sans CJK SC", sans-serif;
}

.wen em + em {
    font-size: 14px;
    line-height: 16px;
}

.align-body {
    display: flex;
}

.align-left {
    width: 193px;
    padding: 13px 0 0 11px;
}

.align-tools {
    grid-template-columns: 34px 34px 34px 6px 36px 8px;
}

.align-tools.second {
    grid-template-columns: 34px 34px 34px 6px 36px 32px;
    margin-top: 12px;
}

.sep.tall {
    height: 91px;
    margin-top: 9px;
}

.align-right {
    padding: 17px 0 0 10px;
}

.wrap {
    display: flex;
    align-items: center;
    gap: 4px;
    height: 28px;
}

.wrap span {
    padding-bottom: 2px;
}

.wrap.second {
    margin-top: 19px;
}

.wrap .chev {
    margin-left: 10px;
}

.ab {
    font: 600 14.5px "Open Sans", sans-serif;
    fill: #a5a3a5;
}

.num-tools {
    grid-template-columns: 31px 22px 38px 29px 13px 28px 40px;
    margin-top: 13px;
}

.pct {
    font: 24px/30px "Noto Sans", sans-serif;
    color: #a09ea0;
    padding-bottom: 3px;
}

.dec {
    font: 600 12px "Open Sans", sans-serif;
    fill: #a09ea0;
}

.style-body {
    display: grid;
    grid-template-columns: 102px 73px 120px;
    padding-top: 6px;
    align-items: start;
    justify-items: center;
}

.cond > svg:first-child {
    margin-left: 5px;
}

.cond .chev {
    margin-left: 4px;
}

.tbl > svg:first-child {
    margin-left: 5px;
}

.inline-chev {
    display: flex;
    align-items: center;
    gap: 6px;
    margin: 3px 2px 0 0;
}

.inline-chev .chev {
    margin-top: 0;
}

.cell-cmd {
    display: flex;
    align-items: center;
    height: 23px;
    gap: 3px;
    margin-bottom: 11px;
}

.cell-cmd span {
    padding-bottom: 2px;
}

.cell-cmd .chev {
    margin-left: 12px;
}

.fmt-cmd {
    margin-bottom: 0;
}

.fmt-cmd .chev {
    margin-left: 3px;
}

.edit-body {
    display: flex;
    padding-top: 4px;
}

.edit-side {
    width: 67px;
    padding-left: 17px;
}

.edit-cmd {
    display: flex;
    align-items: center;
    gap: 6px;
    height: 24px;
    margin-bottom: 10px;
}

.edit-cmd:first-child .chev {
    margin-left: 4px;
}

.edit-body .big {
    width: 97px;
    padding-top: 2px;
}

.edit-body .big > svg:first-child {
    height: 46px;
}

.az {
    font: 600 23px "Open Sans", sans-serif;
    fill: #b1afb1;
}

.collapse {
    margin: 125px 0 0 76px;
}

/* formula bar */
.formula-bar {
    height: 68px;
    flex: none;
    display: flex;
    padding: 16px 7px 16px 7px;
    background: linear-gradient(#cdcdcd, #e6e6e6 11px);
    font-family: "Noto Sans", "Noto Sans CJK SC", sans-serif;
}

.box {
    height: 37px;
    background-color: #fdfdfd;
    border: 1px solid #c6c6c6;
    display: flex;
    align-items: center;
    justify-content: space-between;
}

.name-box {
    width: 152px;
    padding: 0 10px 0 6px;
    font-size: 19px;
}

.name-box .tri {
    color: #777;
}

.formula-bar .grip {
    margin: 11px 22px 0 20px;
}

.fx-box {
    width: 164px;
    justify-content: flex-start;
    gap: 36px;
    padding-left: 18px;
}

.fx-box span {
    font: italic 25px/30px "Liberation Serif", serif;
    color: #6a6a6a;
    margin-left: -1px;
    padding-bottom: 3px;
}

.input {
    flex: 1;
    margin-left: 4px;
    padding: 0 7px 0 16px;
    font-size: 19px;
}

.input span {
    padding-bottom: 2px;
}

/* worksheet */
.workspace {
    height: 646px;
    flex: none;
    display: flex;
}

.sheet-wrap {
    width: 1890px;
    position: relative;
    overflow: hidden;
    border-bottom: 1px solid #999;
}

.sheet {
    display: grid;
    grid-template-columns: 43px 104px 104px 104px 406px 203px repeat(8, 104px) 94px;
    grid-template-rows: 28px 35px;
    grid-auto-rows: 28px;
    color: #000;
    font-size: 20px;
    font-weight: 300;
}

.corner {
    border-right: 1px solid #bbb;
    border-bottom: 1px solid #999;
    background: linear-gradient(135deg, #e6e6e6 50%, #b4b4b4 50%) 18px 4px / 21px 20px no-repeat;
}

.col,
.rownum {
    background-color: #e6e6e6;
    text-align: center;
}

.col {
    line-height: 29px;
    border-right: 1px solid #bdbdbd;
    border-bottom: 1px solid #999;
    padding-left: 1px;
}

.col:nth-child(15) {
    padding-left: 11px;
    border-right: 0;
}

.rownum {
    line-height: 29px;
    border-right: 1px solid #999;
    border-bottom: 1px solid #c4c4c4;
    overflow: hidden;
}

.sheet .rownum:nth-child(16) {
    line-height: 43px;
}

.col.current {
    background-color: #d2d2d2;
    color: #217346;
    border-bottom: 2px solid #217346;
}

.rownum.current {
    background-color: #d2d2d2;
    color: #217346;
    border-right: 2px solid #217346;
}

.cell {
    background-color: #fff;
    border-right: 1px solid #d4d4d4;
    border-bottom: 1px solid #d4d4d4;
    white-space: nowrap;
}

.cell:nth-child(15n) {
    border-right-color: #999;
}

.filled {
    border-color: #000;
    font-size: 21.7px;
    line-height: 28px;
    padding-left: 3px;
}

.head {
    font-size: 27px;
    font-weight: bold;
    line-height: 35px;
    text-align: center;
    padding: 0 0 0 1px;
}

.editing {
    font: 300 21.5px/28px "Noto Sans", sans-serif;
}

.cell-edit {
    position: absolute;
    left: 353px;
    top: 61px;
    width: 409px;
    height: 31px;
    border: 2px solid #217346;
}

.cell-edit::after {
    content: "";
    position: absolute;
    right: -4px;
    bottom: -4px;
    width: 6px;
    height: 6px;
    background-color: #217346;
    border: solid #fff;
    border-width: 1px 0 0 1px;
}

.suggest {
    position: absolute;
    left: 373px;
    top: 93px;
    width: 152px;
    height: 64px;
    background-color: #fff;
    border: 1px solid #666;
    color: #000;
    font: 19px/32px "Noto Sans", sans-serif;
}

.suggest div {
    display: flex;
    align-items: center;
    height: 31px;
    padding-left: 3px;
}

.suggest span {
    flex: 1;
    height: 31px;
    padding-left: 2px;
    margin-left: -1px;
}

.suggest .picked span {
    background-color: #0178d7;
    color: #fff;
    outline: 1px dotted #e08030;
    outline-offset: -1px;
}

.fxi {
    font: italic 18px "Liberation Serif", serif;
    fill: #333;
}

.hint {
    position: absolute;
    left: 528px;
    top: 124px;
    width: 236px;
    height: 30px;
    border: 1px solid #c6c6c6;
    background-color: #fff;
    box-shadow: 2px 2px 3px rgba(0, 0, 0, 0.15);
    font-size: 18px;
    line-height: 23px;
    padding-left: 7px;
    color: #555;
    white-space: nowrap;
}

.vscroll {
    width: 26px;
    margin: 1px 0 -1px 2px;
    background-color: #dadada;
    display: flex;
    flex-direction: column;
}

.sbtn {
    width: 26px;
    height: 25px;
    background-color: #fff;
    border: 1px solid #777;
    display: flex;
    align-items: center;
    justify-content: center;
    color: #666;
}

.sbtn .tri {
    width: 12px;
    height: 6px;
}

.vthumb {
    height: 567px;
    background-color: #fff;
    border: 1px solid #777;
}

.sbtn.down {
    margin-top: auto;
}

/* sheet tabs */
.sheet-tabs {
    height: 33px;
    flex: none;
    border-bottom: 1px solid #c6c6c6;
    display: flex;
    align-items: flex-start;
    padding-left: 28px;
}

.sheet-tabs > svg:first-child {
    margin-top: 8px;
}

.sheet-tab {
    width: 93px;
    height: 30px;
    margin: -1px 0 0 45px;
    position: relative;
    background-color: #fff;
    border: solid #999;
    border-width: 0 1px 2px;
    border-bottom-color: #217346;
    color: #217346;
    text-align: center;
    font: 500 19px/26px "Noto Sans", sans-serif;
}

.add {
    margin: 4px 0 0 38px;
}

.sheet-tabs .grip {
    margin: 8px 0 0 878px;
}

.hscroll {
    margin: 3px 0 0 17px;
    width: 725px;
    background-color: #dadada;
    display: flex;
}

.hthumb {
    width: 622px;
    background-color: #fff;
    border: 1px solid #777;
}

.sbtn.right {
    margin-left: auto;
}

.status {
    height: 32px;
    flex: none;
    background-color: #f3f1ef;
    display: flex;
    align-items: center;
    padding-left: 11px;
    line-height: 30px;
}

.status svg {
    margin-left: 27px;
}

.status .view {
    margin-left: 1389px;
}

/* taskbar */
.taskbar {
    height: 60px;
    flex: none;
    background: linear-gradient(90deg, #d5e6ed, #d4e3ec 30%, #d7e6ec 50%, #dbdfdf 74%, #d2e0e7 80%, #cfdfe8);
    display: flex;
    justify-content: space-between;
}

.apps {
    display: grid;
    grid-template-columns: 72px 72px 72px 72px 80px 73px 77px 73px;
}

.apps span {
    display: flex;
    align-items: center;
    justify-content: center;
}

.apps .open {
    background: linear-gradient(#d08527, #d08527) 50% 100% / 61px 3px no-repeat;
}

.xl {
    font: bold 15px "Open Sans", sans-serif;
    fill: #fff;
}

.tray {
    display: grid;
    grid-template-columns: 36px 36px 36px 36px 36px 39px 42px 39px 48px 120px 56px 22px;
    align-items: center;
    justify-items: center;
}

.ime-lang {
    font-size: 24px;
    line-height: 24px;
    padding-bottom: 3px;
    color: #fff;
    text-shadow: 0 0 2px #222, 0 0 1px #222, 0 0 1px #222;
}

.clock {
    display: flex;
    flex-direction: column;
    text-align: center;
    color: #000;
    font: 19.5px/28px "Open Sans", sans-serif;
}

.desk {
    width: 8px;
    height: 60px;
    justify-self: end;
    border-left: 1px solid #9fb0ba;
}

.ime {
    position: absolute;
    left: 1560px;
    top: 974px;
    width: 361px;
    height: 39px;
    background-color: #fff;
    border: 1px solid #b4cbea;
    border-radius: 3px;
    display: grid;
    grid-template-columns: repeat(9, 36.2px);
    align-items: center;
    justify-items: center;
    padding-left: 33px;
    fill: #0a6cdb;
}

.ime b {
    color: #0a6cdb;
    font-size: 22px;
    line-height: 30px;
    padding-bottom: 2px;
}

.ime-logo {
    position: absolute;
    left: -17px;
    top: -7px;
}

.meter {
    position: absolute;
    left: 1905px;
    top: 634px;
    overflow: hidden;
}

.watermark {
    position: absolute;
    left: 1466px;
    top: 870px;
    fill: rgba(255, 255, 255, 0.75);
    stroke: rgba(160, 160, 160, 0.4);
    stroke-width: 1.5;
    filter: drop-shadow(0 0 1px rgba(120, 120, 120, 0.4));
}

.wm-bai {
    font: bold 78px "Liberation Sans", sans-serif;
}

.wm-du {
    font: bold 44px "Liberation Sans", sans-serif;
}

.wm-cn {
    font: 900 59px "Noto Sans CJK SC", sans-serif;
}

.wm-url {
    font: bold 36px "Open Sans", sans-serif;
    stroke-width: 1;
}
```
